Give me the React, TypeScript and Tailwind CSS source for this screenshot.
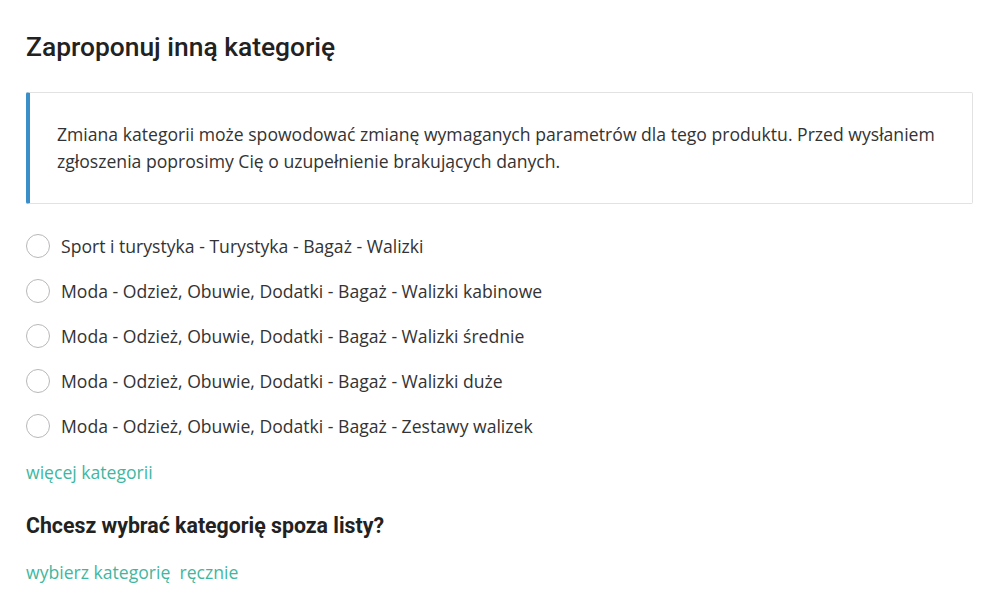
import React, { useState } from "react";

const categories = [
  "Sport i turystyka - Turystyka - Bagaż - Walizki",
  "Moda - Odzież, Obuwie, Dodatki - Bagaż - Walizki kabinowe",
  "Moda - Odzież, Obuwie, Dodatki - Bagaż - Walizki średnie",
  "Moda - Odzież, Obuwie, Dodatki - Bagaż - Walizki duże",
  "Moda - Odzież, Obuwie, Dodatki - Bagaż - Zestawy walizek",
];

const App = () => {
  const [selected, setSelected] = useState<number | null>(null);

  return (
    <div className="min-h-screen bg-white px-[26px] pt-[30px] text-[#333] font-['Open_Sans',sans-serif]">
      {/* Header */}
      <h1 className="font-['Roboto',sans-serif] font-medium text-[26.4px] leading-[34px] text-[#222]">
        Zaproponuj inną kategorię
      </h1>

      {/* Info box */}
      <div className="mt-[28px] w-[947px] border border-[#e2e2e2] border-l-4 border-l-[#3a8fc9] rounded-[2px] pl-[27px] pr-6 py-[28px] text-[17.6px] leading-[27px] text-[#333]">
        Zmiana kategorii może spowodować zmianę wymaganych parametrów dla tego produktu. Przed wysłaniem
        <br />
        zgłoszenia poprosimy Cię o uzupełnienie brakujących danych.
      </div>

      {/* Category list */}
      <div className="mt-[30px] flex flex-col gap-[21px]">
        {categories.map((name, i) => (
          <label
            key={i}
            className="flex items-center gap-[11px] cursor-pointer"
            onClick={() => setSelected(i)}
          >
            <span className="flex h-6 w-6 shrink-0 items-center justify-center rounded-full border-[1.5px] border-[#b8b8b8] bg-white">
              {selected === i && <span className="h-3 w-3 rounded-full bg-[#3fb79f]" />}
            </span>
            <span className="text-[17.6px] leading-6 text-[#333]">{name}</span>
          </label>
        ))}
      </div>

      <a href="#" className="mt-[22px] block text-[17.6px] leading-6 text-[#3fb79f]">
        więcej kategorii
      </a>

      <h2 className="mt-[28px] font-['Roboto',sans-serif] font-bold text-[21.3px] leading-7 text-[#222]">
        Chcesz wybrać kategorię spoza listy?
      </h2>

      <a href="#" className="mt-[20px] block text-[17.6px] leading-6 text-[#3fb79f] whitespace-pre">
        {"wybierz kategorię  ręcznie"}
      </a>
    </div>
  );
};

export default App;
